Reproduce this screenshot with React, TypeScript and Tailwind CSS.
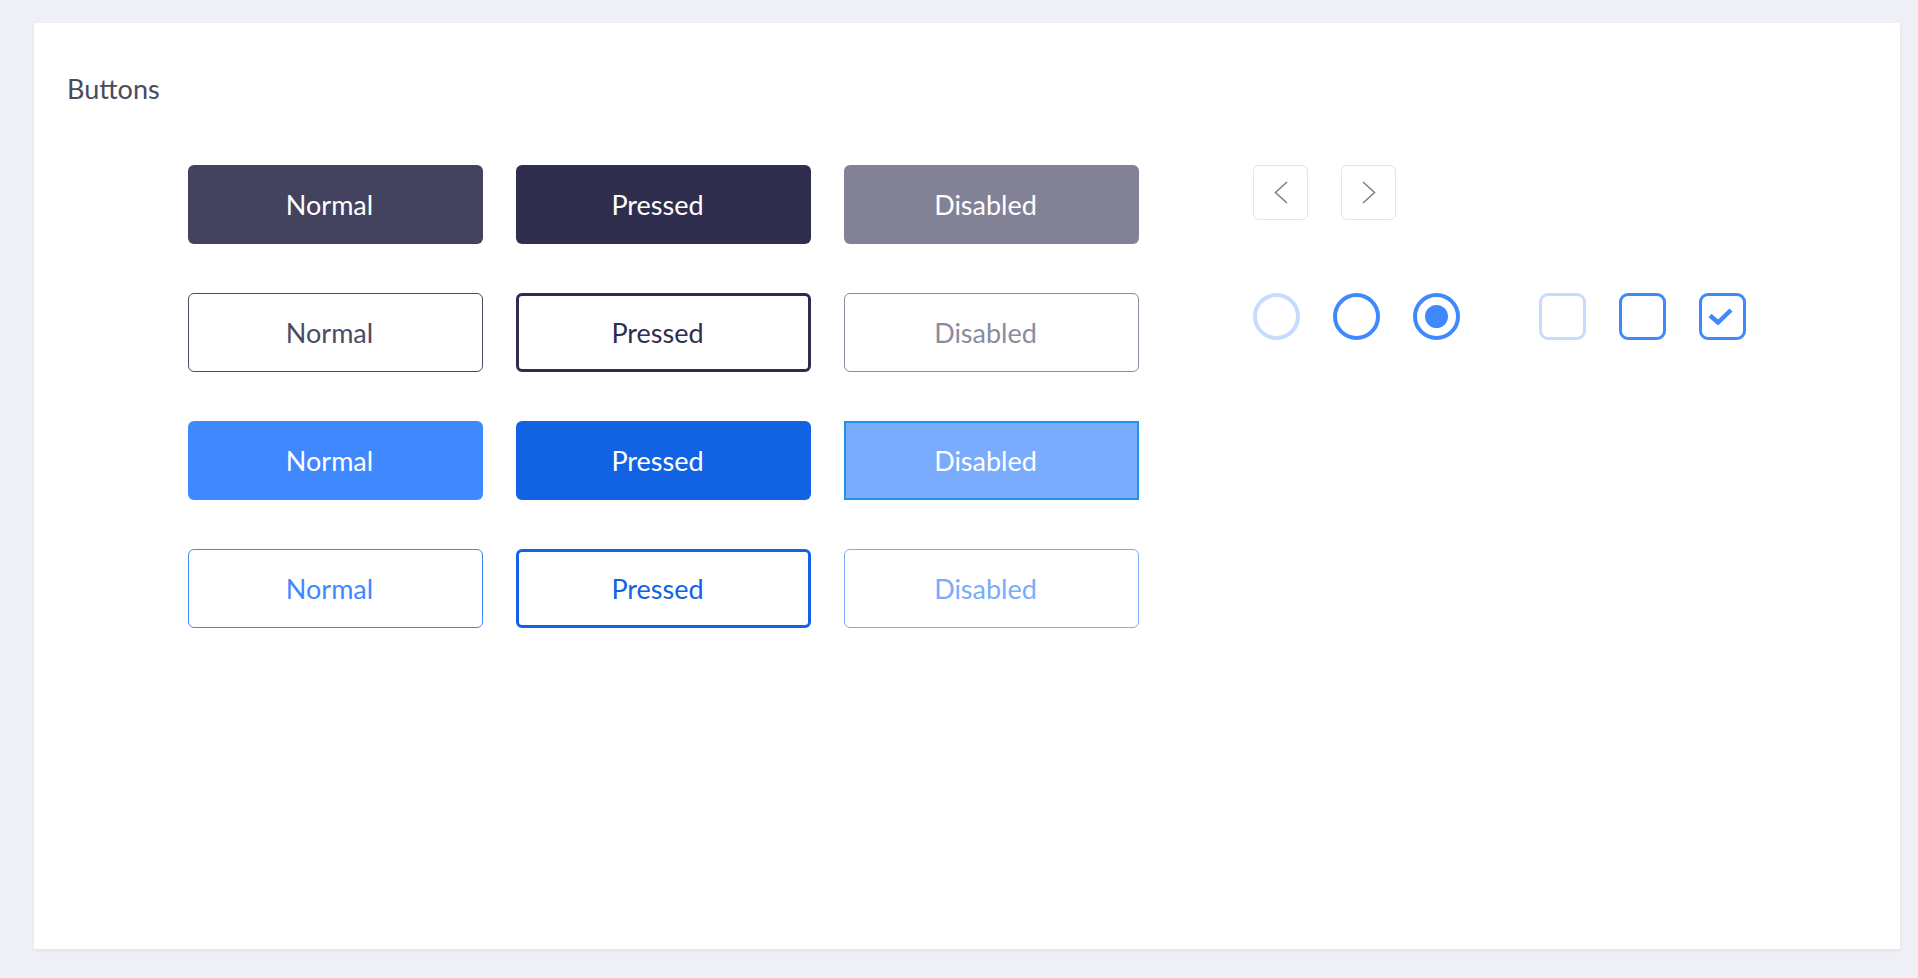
import React from "react";

// ── Buttons showcase ────────────────────────────────────────

type Btn = { label: string; className: string };

const rows: Btn[][] = [
  [
    { label: "Normal", className: "bg-[#434360] text-white" },
    { label: "Pressed", className: "bg-[#2f2e4f] text-white" },
    { label: "Disabled", className: "bg-[#838195] text-white" },
  ],
  [
    { label: "Normal", className: "bg-white border-[1.5px] border-[#4a4a63] text-[#4b4b63]" },
    { label: "Pressed", className: "bg-white border-[3px] border-[#2e2d4f] text-[#2f2e4f]" },
    { label: "Disabled", className: "bg-white border-[1.5px] border-[#8d8c9f] text-[#8c8b9e]" },
  ],
  [
    { label: "Normal", className: "bg-[#3f88fd] text-white" },
    { label: "Pressed", className: "bg-[#1163e3] text-white" },
    { label: "Disabled", className: "bg-[#7aabfd] border-2 border-[#1e96e8] !rounded-none text-white" },
  ],
  [
    { label: "Normal", className: "bg-white border-[1.5px] border-[#3f88fd] text-[#3f88fd]" },
    { label: "Pressed", className: "bg-white border-[3px] border-[#1163e3] text-[#1163e3]" },
    { label: "Disabled", className: "bg-white border-[1.5px] border-[#7aabfd] text-[#7aabfd]" },
  ],
];

function Chevron({ dir }: { dir: "left" | "right" }) {
  return (
    <svg width="14" height="23" viewBox="0 0 14 23" fill="none">
      <path
        d={dir === "left" ? "M13 1 L1.5 11.5 L13 22" : "M1 1 L12.5 11.5 L1 22"}
        stroke="#80808f"
        strokeWidth="1.6"
      />
    </svg>
  );
}

export default function App() {
  return (
    <div className="min-h-screen bg-[#eff0f5] pt-[23px] pl-[34px]" style={{ fontFamily: "Lato, 'Open Sans', sans-serif" }}>
      <div className="w-[1866px] h-[926px] bg-white shadow-[0_2px_4px_rgba(30,30,60,0.06)] pt-[50px] pl-[33px]">
        <h1 className="text-[27px] leading-[32px] font-normal text-[#4a4a5e]">Buttons</h1>

        <div className="flex mt-[60px] ml-[121px]">
          {/* Grid of buttons */}
          <div className="grid grid-cols-[295px_295px_295px] gap-x-[33px] gap-y-[49px]">
            {rows.flat().map((b, i) => (
              <button
                key={i}
                className={`h-[79px] rounded-[6px] flex items-center justify-center pt-[2px] pr-[12px] text-[27px] ${b.className}`}
              >
                {b.label}
              </button>
            ))}
          </div>

          {/* Controls */}
          <div className="ml-[114px] flex flex-col">
            <div className="flex gap-[33px]">
              <button className="w-[55px] h-[55px] rounded-[6px] border-[1.5px] border-[#e4e4ea] flex items-center justify-center">
                <Chevron dir="left" />
              </button>
              <button className="w-[55px] h-[55px] rounded-[6px] border-[1.5px] border-[#e4e4ea] flex items-center justify-center">
                <Chevron dir="right" />
              </button>
            </div>

            <div className="flex items-center mt-[73px]">
              <div className="flex gap-[33px]">
                <span className="w-[47px] h-[47px] rounded-full border-[4.5px] border-[#c6dcfd]" />
                <span className="w-[47px] h-[47px] rounded-full border-[4.5px] border-[#3f88fd]" />
                <span className="w-[47px] h-[47px] rounded-full border-[4.5px] border-[#3f88fd] flex items-center justify-center">
                  <span className="w-[23px] h-[23px] rounded-full bg-[#3f88fd]" />
                </span>
              </div>
              <div className="flex gap-[33px] ml-[79px]">
                <span className="w-[47px] h-[47px] rounded-[9px] border-[3.5px] border-[#c6dcfd]" />
                <span className="w-[47px] h-[47px] rounded-[9px] border-[3.5px] border-[#3f88fd]" />
                <span className="w-[47px] h-[47px] rounded-[9px] border-[3.5px] border-[#3f88fd] flex items-center justify-center">
                  <svg width="26" height="18" viewBox="0 0 26 18" fill="none" className="mr-[3px]">
                    <path d="M2 7.5 L10 14.5 L23 2" stroke="#3f88fd" strokeWidth="4.5" strokeLinejoin="miter" />
                  </svg>
                </span>
              </div>
            </div>
          </div>
        </div>
      </div>
    </div>
  );
}
